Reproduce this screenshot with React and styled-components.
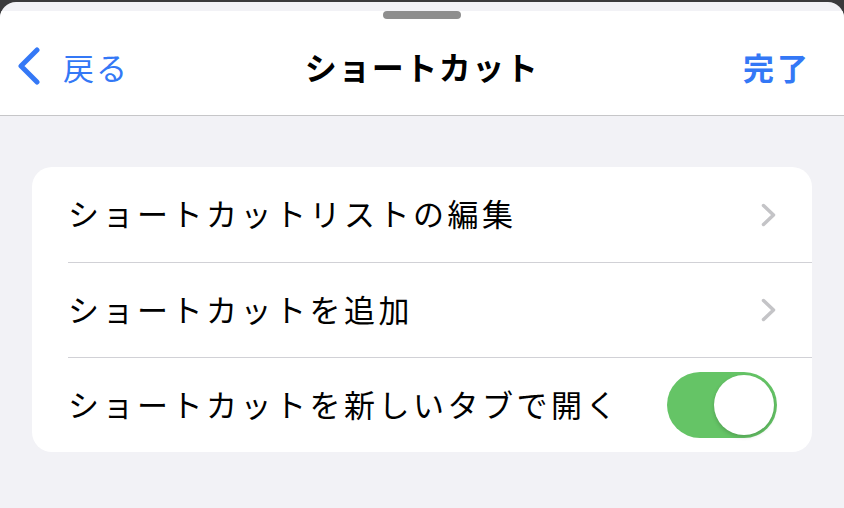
import React from 'react'
import styled, { createGlobalStyle } from 'styled-components'

const Global = createGlobalStyle`
html, body {
  margin: 0;
  padding: 0;
  background: #3a3a3c;
  font-family: "Noto Sans CJK JP", "Noto Sans", sans-serif;
}
`

const Sheet = styled.div`
margin-top: 2px;
height: 506px;
background: #f2f2f6;
border-radius: 16px 16px 0 0;
overflow: hidden;
`

const Header = styled.header`
background: #fff;
border-bottom: 1px solid #c6c6c8;
`

const Grabber = styled.div`
width: 78px;
height: 8px;
margin: 9px auto 0;
border-radius: 4px;
background: #8e8e8e;
`

const NavBar = styled.div`
height: 96px;
display: grid;
grid-template-columns: 1fr auto 1fr;
align-items: center;
padding: 0 17px 2px;
box-sizing: border-box;
`

const Back = styled.button`
justify-self: start;
display: flex;
align-items: center;
gap: 22px;
border: none;
background: none;
padding: 0;
color: #3478f6;
font-family: inherit;
font-size: 31px;
letter-spacing: 2px;
`

const Title = styled.h1`
margin: 0;
font-size: 32px;
font-weight: 700;
letter-spacing: 1.5px;
color: #000;
`

const Done = styled.button`
justify-self: end;
margin-right: 16px;
border: none;
background: none;
padding: 0;
color: #3478f6;
font-family: inherit;
font-size: 31px;
font-weight: 700;
letter-spacing: 3px;
`

const Content = styled.main`
padding: 51px 32px;
`

const Card = styled.section`
background: #fff;
border-radius: 20px;
overflow: hidden;
`

const Row = styled.div`
height: 95px;
display: flex;
align-items: center;
justify-content: space-between;
margin-left: 36px;
padding-right: ${p => p.$toggle ? 35 : 36}px;
border-top: ${p => p.$first ? 'none' : '1px solid #d1d1d6'};
box-sizing: border-box;
`

const Label = styled.span`
font-size: 31px;
letter-spacing: 3.5px;
color: #000;
padding-bottom: 4px;
`

const Toggle = styled.div`
width: 110px;
height: 66px;
border-radius: 33px;
background: #65c466;
display: flex;
align-items: center;
justify-content: flex-end;
padding: 0 3px;
box-sizing: border-box;
`

const Knob = styled.div`
width: 60px;
height: 60px;
border-radius: 50%;
background: #fff;
box-shadow: 0 2px 4px rgba(0, 0, 0, 0.18);
`

const BackChevron = () => (
  <svg width="24" height="38" viewBox="0 0 24 38">
    <path d="M20 3 L4 19 L20 35" fill="none" stroke="#3478f6" strokeWidth="5" strokeLinecap="round" strokeLinejoin="round" />
  </svg>
)

const Chevron = () => (
  <svg width="15" height="24" viewBox="0 0 15 24">
    <path d="M2.5 2.5 L12.5 12 L2.5 21.5" fill="none" stroke="#c4c4c7" strokeWidth="3.5" strokeLinecap="round" strokeLinejoin="round" />
  </svg>
)

const items = [
  { label: 'ショートカットリストの編集', type: 'link' },
  { label: 'ショートカットを追加', type: 'link' },
  { label: 'ショートカットを新しいタブで開く', type: 'toggle' },
]

export default function App() {
  return (
    <>
      <Global />
      <Sheet>
        <Header>
          <Grabber />
          <NavBar>
            <Back><BackChevron />戻る</Back>
            <Title>ショートカット</Title>
            <Done>完了</Done>
          </NavBar>
        </Header>
        <Content>
          <Card>
            {items.map((it, i) => (
              <Row key={it.label} $first={i === 0} $toggle={it.type === 'toggle'}>
                <Label>{it.label}</Label>
                {it.type === 'toggle'
                  ? <Toggle><Knob /></Toggle>
                  : <Chevron />}
              </Row>
            ))}
          </Card>
        </Content>
      </Sheet>
    </>
  )
}
